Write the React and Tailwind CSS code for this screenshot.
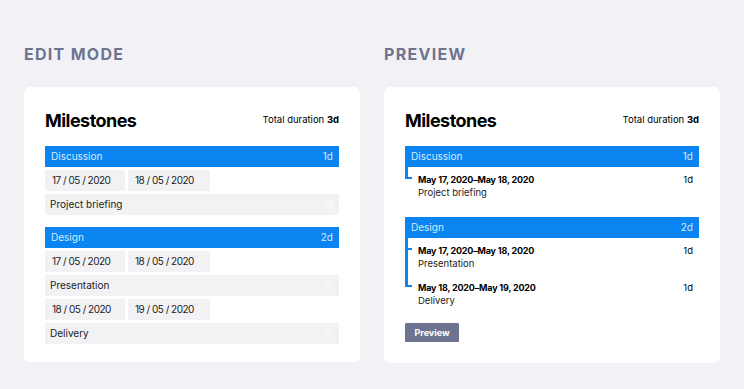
const font = { fontFamily: "Inter, 'Noto Sans', sans-serif" };

const editGroups = [
  {
    name: "Discussion",
    duration: "1d",
    items: [{ start: "17 / 05 / 2020", end: "18 / 05 / 2020", label: "Project briefing" }],
  },
  {
    name: "Design",
    duration: "2d",
    items: [
      { start: "17 / 05 / 2020", end: "18 / 05 / 2020", label: "Presentation" },
      { start: "18 / 05 / 2020", end: "19 / 05 / 2020", label: "Delivery" },
    ],
  },
];

const previewGroups = [
  {
    name: "Discussion",
    duration: "1d",
    items: [{ range: "May 17, 2020–May 18, 2020", label: "Project briefing", duration: "1d" }],
  },
  {
    name: "Design",
    duration: "2d",
    items: [
      { range: "May 17, 2020–May 18, 2020", label: "Presentation", duration: "1d" },
      { range: "May 18, 2020–May 19, 2020", label: "Delivery", duration: "1d" },
    ],
  },
];

function CardHeader() {
  return (
    <div className="flex items-center justify-between h-[24px] mb-[14px]">
      <h2 className="text-[18px] font-bold text-black tracking-[-0.03em]">Milestones</h2>
      <p className="text-[9.5px] text-black">
        Total duration <span className="font-bold">3d</span>
      </p>
    </div>
  );
}

function GroupBar({ name, duration }) {
  return (
    <div className="h-[21px] bg-[#0a84f0] flex items-center justify-between px-[6px] text-[10px] text-[#d6eaff]">
      <span>{name}</span>
      <span>{duration}</span>
    </div>
  );
}

function Handle() {
  return (
    <div className="flex gap-[2px] opacity-70">
      <div className="w-[1px] h-[8px] bg-white"></div>
      <div className="w-[1px] h-[8px] bg-white"></div>
      <div className="w-[1px] h-[8px] bg-white"></div>
    </div>
  );
}

function EditCard() {
  return (
    <div className="bg-white rounded-[6px] px-[21px] pt-[21px] pb-[18px]">
      <CardHeader />
      <div className="flex flex-col gap-[12px]">
        {editGroups.map((g) => (
          <div key={g.name} className="flex flex-col gap-[3px]">
            <GroupBar name={g.name} duration={g.duration} />
            {g.items.map((it) => (
              <div key={it.label} className="flex flex-col gap-[3px]">
                <div className="flex gap-[3px]">
                  <div className="w-[80px] h-[21px] bg-[#f2f2f5] flex items-center pl-[7px] text-[10px] tracking-[-0.05em] text-[#1a1a1a]">
                    {it.start}
                  </div>
                  <div className="w-[82px] h-[21px] bg-[#f2f2f5] flex items-center pl-[7px] text-[10px] tracking-[-0.05em] text-[#1a1a1a]">
                    {it.end}
                  </div>
                </div>
                <div className="h-[21px] bg-[#f2f2f5] flex items-center justify-between pl-[5px] pr-[6px] text-[10px] text-[#1a1a1a]">
                  <span>{it.label}</span>
                  <Handle />
                </div>
              </div>
            ))}
          </div>
        ))}
      </div>
    </div>
  );
}

function PreviewCard() {
  return (
    <div className="bg-white rounded-[6px] px-[21px] pt-[21px] pb-[21px]">
      <CardHeader />
      <div className="flex flex-col gap-[18px]">
        {previewGroups.map((g) => (
          <div key={g.name}>
            <GroupBar name={g.name} duration={g.duration} />
            <div className="flex flex-col gap-[11px] pt-[6px]">
              {g.items.map((it, i) => (
                <div key={it.label} className="relative flex justify-between pl-[13px] pr-[6px]">
                  <div className={`absolute left-0 w-[3px] bg-[#0a84f0] ${i === 0 ? "top-[-6px] h-[12px]" : "top-[-35px] h-[41px]"}`}></div>
                  <div className="absolute left-0 top-[4px] w-[7px] h-[2px] bg-[#0a84f0]"></div>
                  <div className="flex flex-col">
                    <span className="text-[9px] font-bold text-black leading-[13px] tracking-[-0.02em]">{it.range}</span>
                    <span className="text-[9.5px] text-[#222] leading-[13px]">{it.label}</span>
                  </div>
                  <span className="text-[9.5px] text-black leading-[13px]">{it.duration}</span>
                </div>
              ))}
            </div>
          </div>
        ))}
      </div>
      <button className="mt-[16px] h-[19px] w-[54px] bg-[#6e7490] text-white text-[9px] font-bold rounded-[1px] flex items-center justify-center">
        Preview
      </button>
    </div>
  );
}

export default function App() {
  return (
    <div className="min-h-screen w-[744px] h-[389px] bg-[#f2f2f6] pt-[44px] px-[24px] overflow-hidden" style={font}>
      <div className="grid grid-cols-[336px_336px] gap-x-[24px]">
        <div>
          <h1 className="text-[16px] font-bold tracking-[0.08em] text-[#6e7490] h-[20px] leading-[20px] mb-[23px]">EDIT MODE</h1>
          <EditCard />
        </div>
        <div>
          <h1 className="text-[16px] font-bold tracking-[0.08em] text-[#6e7490] h-[20px] leading-[20px] mb-[23px]">PREVIEW</h1>
          <PreviewCard />
        </div>
      </div>
    </div>
  );
}
